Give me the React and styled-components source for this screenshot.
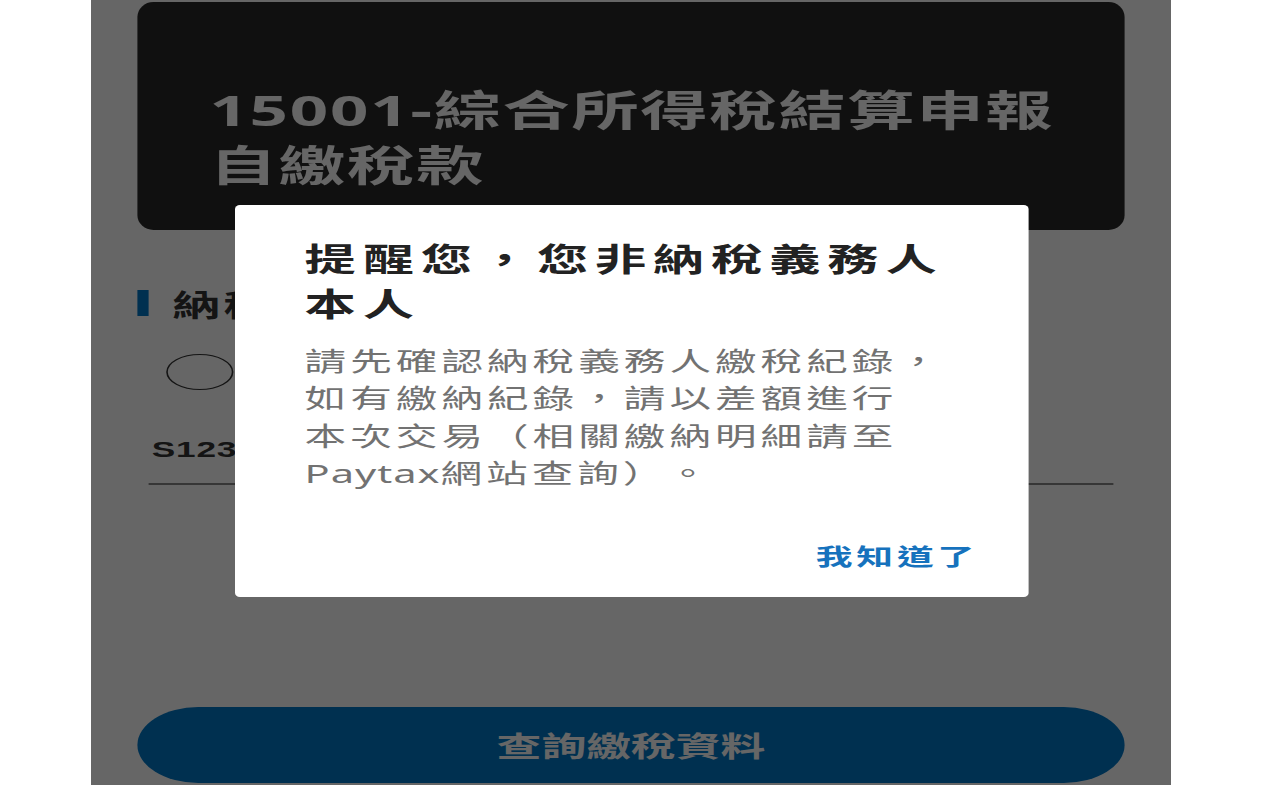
import React from "react";
import styled, { createGlobalStyle } from "styled-components";

const GlobalStyle = createGlobalStyle`
  html, body {
    margin: 0;
    padding: 0;
    background: #ffffff;
  }
  body {
    font-family: "Noto Sans", "Noto Sans CJK TC", sans-serif;
  }
  * {
    box-sizing: border-box;
  }
`;

const Stage = styled.div`
  width: 1280px;
  height: 790px;
  overflow: hidden;
  padding-left: 91px;
  background: #ffffff;
`;

/* the reference is a phone screen stretched 1.6x horizontally */
const Phone = styled.div`
  position: relative;
  width: 675px;
  height: 785px;
  transform: scaleX(1.6);
  transform-origin: left top;
  background: #ffffff;
  display: flex;
  flex-direction: column;
  padding: 2px 29px 2px;
  overflow: hidden;
`;

const Banner = styled.div`
  height: 228px;
  background: #2a2a2a;
  border-radius: 10px / 15px;
  padding: 80px 10px 0 45px;
`;

const BannerTitle = styled.h1`
  margin: 0;
  font-family: "Noto Sans", "Noto Sans CJK TC", sans-serif;
  font-size: 42px;
  line-height: 55px;
  font-weight: 700;
  letter-spacing: 1.1px;
  color: #ffffff;
  white-space: nowrap;
`;

const SectionLabel = styled.div`
  display: flex;
  align-items: center;
  gap: 15px;
  margin-top: 58px;
  height: 30px;
  font-family: "Noto Sans CJK TC", sans-serif;
  font-size: 30px;
  font-weight: 700;
  color: #333333;
  letter-spacing: 2px;
  &::before {
    content: "";
    width: 7px;
    height: 26px;
    background: #0078c8;
  }
`;

const RadioRow = styled.div`
  display: flex;
  align-items: center;
  gap: 14px;
  margin-top: 36px;
  padding-left: 18px;
`;

const Radio = styled.span`
  width: 42px;
  height: 36px;
  border: 1.6px solid #333333;
  border-radius: 50%;
  background: #ffffff;
  flex: none;
`;

const Field = styled.div`
  margin: 30px 7px 0;
  height: 65px;
  padding: 15px 0 0 2px;
  border-bottom: 2px solid #888888;
  font-family: "Liberation Sans", sans-serif;
  font-size: 22px;
  line-height: 30px;
  font-weight: 700;
  letter-spacing: 0.5px;
  color: #333333;
`;

const Submit = styled.button`
  margin-top: auto;
  height: 76px;
  border: none;
  border-radius: 38px;
  background: #0078c8;
  color: #ffffff;
  font-family: "Noto Sans CJK TC", sans-serif;
  font-size: 28px;
  font-weight: 700;
  padding: 0;
`;

const Scrim = styled.div`
  position: absolute;
  inset: 0;
  background: rgba(0, 0, 0, 0.6);
  display: flex;
  justify-content: center;
  align-items: flex-start;
  padding-top: 205px;
`;

const Dialog = styled.div`
  width: 496px;
  height: 392px;
  background: #ffffff;
  border-radius: 3px / 4px;
  padding: 30px 31px 0 44px;
  display: flex;
  flex-direction: column;
`;

const DialogTitle = styled.h2`
  margin: 0;
  font-family: "Noto Sans CJK TC", sans-serif;
  font-size: 32px;
  line-height: 45px;
  font-weight: 700;
  letter-spacing: 4.3px;
  color: #222222;
  white-space: nowrap;
`;

const DialogBody = styled.p`
  margin: 18px 0 0;
  font-family: "Noto Sans", "Noto Sans CJK TC", sans-serif;
  font-size: 26px;
  line-height: 37.3px;
  letter-spacing: 2.5px;
  color: #727272;
  white-space: nowrap;
`;

const Latin = styled.span`
  letter-spacing: 0.6px;
`;

const Stop = styled.span`
  margin-left: 12px;
`;

const Actions = styled.div`
  display: flex;
  justify-content: flex-end;
  margin-top: auto;
  padding-bottom: 26px;
`;

const TextButton = styled.button`
  border: none;
  background: none;
  padding: 0;
  font-family: "Noto Sans CJK TC", sans-serif;
  font-size: 23px;
  line-height: 32px;
  font-weight: 700;
  letter-spacing: 2.4px;
  color: #1672bd;
`;

export default function App() {
  return (
    <>
      <GlobalStyle />
      <Stage>
        <Phone>
          <Banner>
            <BannerTitle>
              15001-綜合所得稅結算申報
              <br />
              自繳稅款
            </BannerTitle>
          </Banner>
          <SectionLabel>納稅義務人</SectionLabel>
          <RadioRow>
            <Radio />
          </RadioRow>
          <Field>S123456789</Field>
          <Submit>查詢繳稅資料</Submit>
          <Scrim>
            <Dialog>
              <DialogTitle>
                提醒您，您非納稅義務人
                <br />
                本人
              </DialogTitle>
              <DialogBody>
                請先確認納稅義務人繳稅紀錄，
                <br />
                如有繳納紀錄，請以差額進行
                <br />
                本次交易（相關繳納明細請至
                <br />
                <Latin>Paytax</Latin>網站查詢）<Stop>。</Stop>
              </DialogBody>
              <Actions>
                <TextButton>我知道了</TextButton>
              </Actions>
            </Dialog>
          </Scrim>
        </Phone>
      </Stage>
    </>
  );
}
